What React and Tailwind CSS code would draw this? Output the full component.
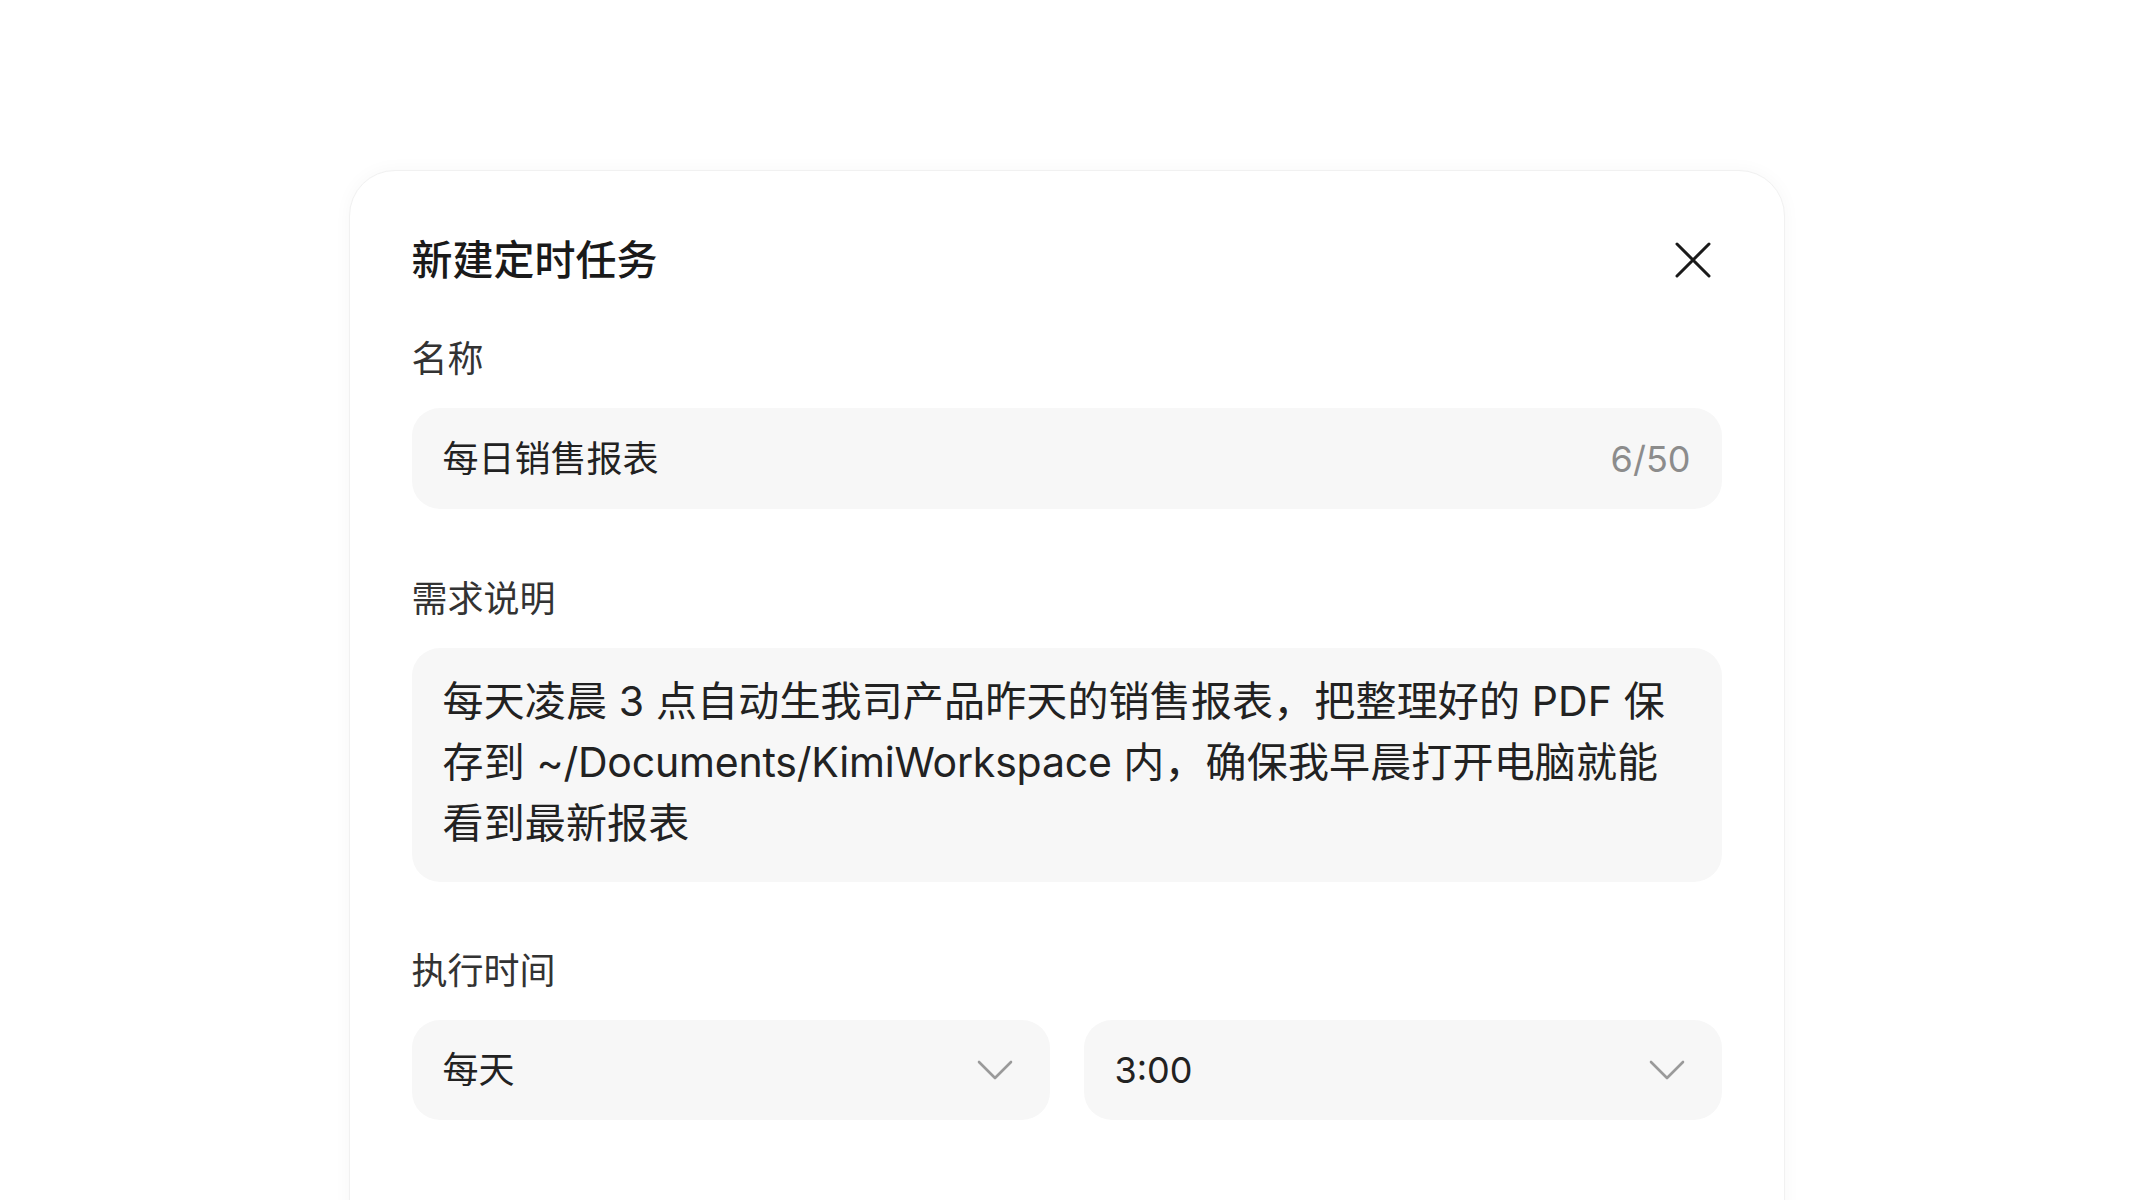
import React from "react";

function Chevron() {
    return (
        <svg width="36" height="20" viewBox="0 0 36 20" fill="none">
            <path
                d="M2 2 L18 18 L34 2"
                stroke="#9a9a9a"
                strokeWidth="2.6"
                strokeLinecap="round"
                strokeLinejoin="round"
            />
        </svg>
    );
}

function Select({ value }) {
    return (
        <div className="flex h-[100px] items-center justify-between rounded-[28px] bg-[#f7f7f7] pl-[31px] pr-[37px]">
            <span className="text-[36px] text-[#222]">{value}</span>
            <Chevron />
        </div>
    );
}

export default function App() {
    return (
        <div className="h-[1200px] overflow-hidden bg-white pt-[170px] font-['Inter','Noto_Sans_CJK_SC',sans-serif]">
            <div className="mx-auto h-[1100px] w-[1436px] rounded-[46px] border border-[#f1f1f1] bg-white px-[62px] pt-[61px] shadow-[0_0_18px_rgba(0,0,0,0.035)]">
                {/* Header */}
                <div className="flex h-[56px] items-center justify-between">
                    <h2 className="text-[41px] font-medium leading-[56px] text-[#1a1a1a]">
                        新建定时任务
                    </h2>
                    <button className="flex h-[58px] w-[58px] items-center justify-center">
                        <svg width="36" height="36" viewBox="0 0 36 36" fill="none">
                            <path
                                d="M2 2 L34 34 M34 2 L2 34"
                                stroke="#1a1a1a"
                                strokeWidth="3"
                                strokeLinecap="round"
                            />
                        </svg>
                    </button>
                </div>

                {/* Name */}
                <div className="mt-[47px] text-[36px] leading-[48px] text-[#333]">名称</div>
                <div className="mt-[25px] flex h-[101px] items-center justify-between rounded-[28px] bg-[#f7f7f7] px-[31px]">
                    <span className="text-[36px] text-[#222]">每日销售报表</span>
                    <span className="text-[36px] text-[#8c8c8c]">6/50</span>
                </div>

                {/* Description */}
                <div className="mt-[66px] text-[36px] leading-[48px] text-[#333]">需求说明</div>
                <div className="mt-[25px] rounded-[28px] bg-[#f7f7f7] px-[31px] pb-[28px] pt-[23px] text-[41px] leading-[61px] tracking-[0.15px] text-[#222]">
                    每天凌晨 3 点自动生我司产品昨天的销售报表，把整理好的 PDF 保
                    <br />
                    存到 <span className="tracking-[-0.2px]">~/Documents/KimiWorkspace</span> 内，确保我早晨打开电脑就能
                    <br />
                    看到最新报表
                </div>

                {/* Schedule */}
                <div className="mt-[65px] text-[36px] leading-[48px] text-[#333]">执行时间</div>
                <div className="mt-[25px] grid grid-cols-2 gap-[34px]">
                    <Select value="每天" />
                    <Select value="3:00" />
                </div>
            </div>
        </div>
    );
}
